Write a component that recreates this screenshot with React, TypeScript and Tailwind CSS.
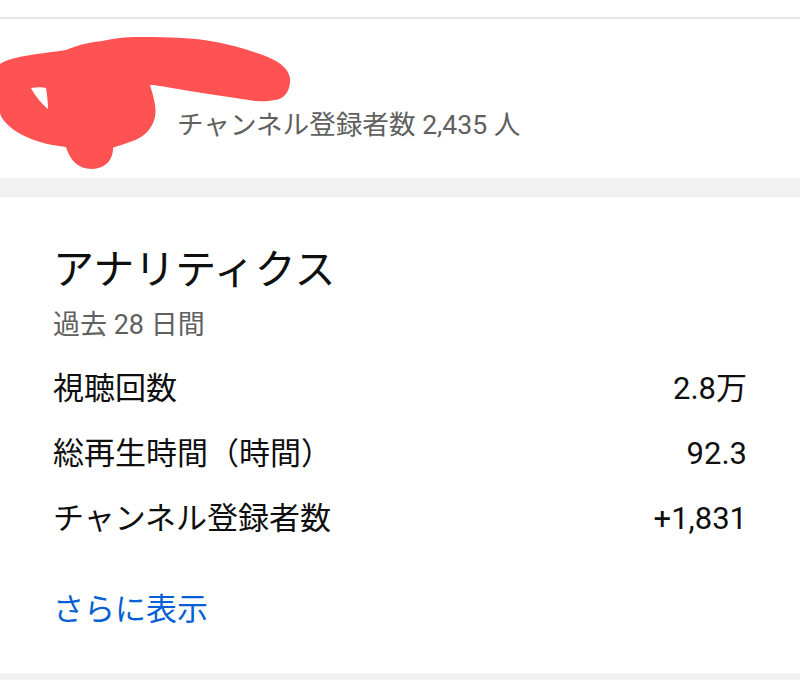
const font = { fontFamily: 'Roboto, "Noto Sans CJK JP", sans-serif' };

const Scribble = () => (
  <svg
    className="absolute left-0 top-0"
    width="300"
    height="160"
    viewBox="0 19 300 160"
    aria-hidden="true"
  >
    <path
      fill="#ff5252"
      fillRule="evenodd"
      d="M0,64 C12,56 40,54 66,50 C80,44 92,42 102,41 C120,37 130,37 143,37 C170,37 190,38 204,40 C230,44 245,49 257,53 C272,58 288,65 290,78 C291,91 284,99 275,100 C265,102 260,101 255,101 C230,97 200,93 178,89 C165,87 156,85 150,85 C153,96 157,106 155,117 C152,130 143,138 130,142 C122,145 114,147 113,148 C113,158 108,168 92,169 C78,169 70,160 66,147 C48,145 28,140 14,130 C5,123 0,117 0,112 Z M31,88 C37,87 43,87 46,88 C47,95 48,102 48,109 C42,104 35,96 31,88 Z"
    />
  </svg>
);

const rows = [
  { label: "視聴回数", value: "2.8万" },
  { label: "総再生時間（時間）", value: "92.3" },
  { label: "チャンネル登録者数", value: "+1,831" },
];

export default function App() {
  return (
    <div className="w-[800px] h-[680px] overflow-hidden bg-[#f1f1f1]" style={font}>
      <div className="h-[17px] bg-white" />
      <div className="h-[2px] bg-[#e5e5e5]" />

      {/* channel header */}
      <div className="relative h-[159px] bg-white">
        <Scribble />
        <p className="pl-[177px] pt-[89px] text-[26.6px] leading-[34px] text-[#606060]">
          チャンネル登録者数 2,435 人
        </p>
      </div>

      <div className="h-[19px]" />

      {/* analytics card */}
      <div className="bg-white h-[476px] px-[53px] pt-[49px]">
        <h2 className="text-[41px] leading-[48px] text-[#0f0f0f]">アナリティクス</h2>
        <p className="mt-[14px] text-[27px] leading-[34px] text-[#606060]">過去 28 日間</p>

        <ul className="mt-[15px]">
          {rows.map((r) => (
            <li
              key={r.label}
              className="flex h-[65px] items-center justify-between text-[31px] text-[#0f0f0f]"
            >
              <span>{r.label}</span>
              <span>{r.value}</span>
            </li>
          ))}
        </ul>

        <p className="mt-[40px] text-[31px] leading-[36px] text-[#065fd4]">さらに表示</p>
      </div>
    </div>
  );
}
